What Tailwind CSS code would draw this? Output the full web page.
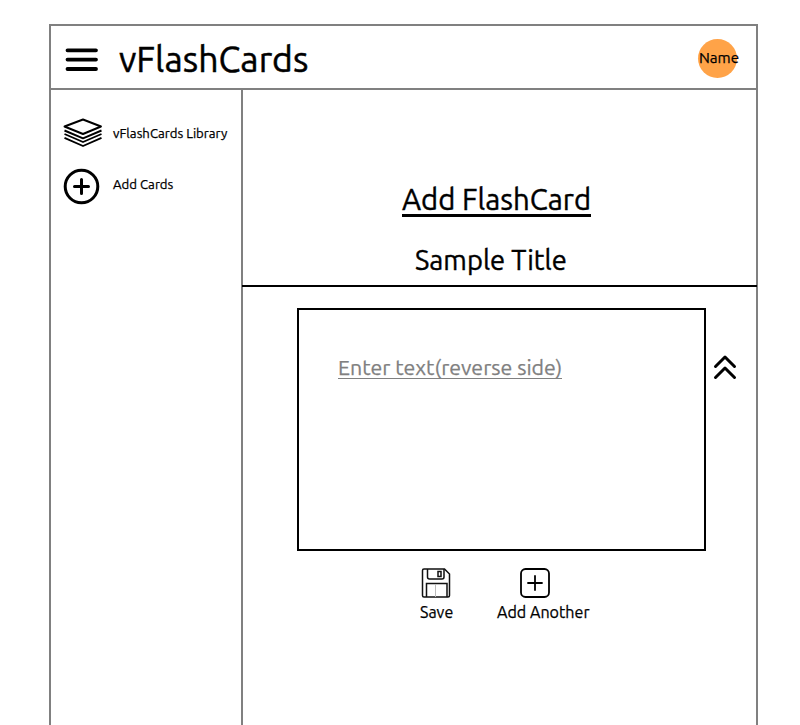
<!DOCTYPE html>
<html lang="en">
<head>
<meta charset="utf-8">
<title>vFlashCards</title>
<script src="https://cdn.jsdelivr.net/npm/@tailwindcss/browser@4"></script>
</head>
<body class="h-[725px] overflow-hidden bg-white pt-6 pl-[49px] font-['Ubuntu','Noto_Sans',sans-serif] text-black [-webkit-text-stroke:0.25px]">
<div class="flex h-[701px] w-[709px] flex-col border-2 border-b-0 border-[#808080]">
  <header class="flex h-16 shrink-0 items-center border-b-2 border-[#808080] pl-[14px]">
    <svg class="mt-[5px] h-[26px] w-[34px]" viewBox="0 0 34 26" stroke="#000" stroke-width="3.8" stroke-linecap="round"><path d="M2.5 3.3h28.5M2.5 12.600h28.5M2.5 22h28.5"/></svg>
    <h1 class="ml-5 h-[62px] w-[190px] text-[35.6px] leading-[66px] whitespace-nowrap [-webkit-text-stroke:0.5px]">vFlashCards</h1>
    <div class="mt-[2px] ml-[389px] flex size-[39px] items-center justify-center rounded-full bg-[#ffa348]"><span class="mt-px ml-[3px] text-[15.2px]">Name</span></div>
  </header>
  <div class="flex min-h-0 flex-1">
    <nav class="w-[192px] shrink-0 border-r-2 border-[#808080] pt-[26px] pl-3">
      <a class="flex h-8 items-center">
        <svg class="h-[31px] w-10" viewBox="0 0 40 31" fill="none" stroke="#000" stroke-width="1.9" stroke-linejoin="round"><path d="M20 2.500 38 9.500 20 17 1.500 9.500Z M1.500 13.500 20 21.300 38.500 13.500M1.500 17 20 25 38.500 17M1.500 20.800 20 29 38.500 20.800"/></svg>
        <span class="mt-0.5 ml-[10px] text-[13.2px] leading-5 whitespace-nowrap">vFlashCards Library</span>
      </a>
      <a class="mt-[19px] flex h-10 items-center">
        <svg class="h-[38px] w-[38px]" viewBox="0 0 38 38" fill="none" stroke="#000" stroke-width="3" stroke-linecap="round"><circle cx="18.500" cy="18.500" r="16.300"/><path d="M18.500 11.500v14M11.500 18.500h14"/></svg>
        <span class="mb-1.5 ml-3 text-[13.2px] leading-5 whitespace-nowrap">Add Cards</span>
      </a>
    </nav>
    <main class="flex min-w-0 flex-1 flex-col">
      <h2 class="mt-[88px] ml-[159px] h-[39px] w-[189px] border-b-3 border-black text-[29.33px] leading-[44px] whitespace-nowrap [-webkit-text-stroke:0.4px]">Add FlashCard</h2>
      <h3 class="mt-[23px] ml-[172px] h-10 text-[27.3px] leading-[41px] whitespace-nowrap [-webkit-text-stroke:0.4px]">Sample Title</h3>
      <hr class="mt-[5px] -mr-px -ml-px border-t-2 border-black">
      <div class="mt-[21px] ml-[54px] flex">
        <section class="h-[243px] w-[409px] border-2 border-black pt-[45px] pl-[39px]">
          <p class="h-[24px] w-[224px] border-b border-[#808080] text-[21.33px] leading-[24px] whitespace-nowrap text-[#808080]">Enter text(reverse side)</p>
        </section>
        <svg class="mt-[46px] ml-[7px] h-[26px] w-6" viewBox="0 0 24 26" fill="none" stroke="#000" stroke-width="3" stroke-linecap="round" stroke-linejoin="round"><path d="M2.500 12.500 12 3 21.500 12.500M2.500 23.500 12 14 21.500 23.500"/></svg>
      </div>
      <div class="mt-4 ml-[176px] flex">
        <button class="flex w-[36px] flex-col items-start">
          <svg class="ml-[2px] h-8 w-[30px]" viewBox="0 0 30 32" fill="none" stroke="#111" stroke-width="1.500"><path d="M3 2h20.500l5 5v21.500q0 1.500-1.500 1.500H3q-1.500 0-1.500-1.500v-25Q1.500 2 3 2Z"/><path d="M6.500 2v8q0 2 2 2h12.500q2 0 2-2V2M5.500 30V16.500h20.500V30"/><path d="M17 4.500h3v5h-3Z"/><path d="M14.500 17v13" stroke="#bbb" stroke-width="1"/></svg>
          <span class="ml-px h-6 text-[16px] leading-[27px]">Save</span>
        </button>
        <button class="ml-[42px] flex flex-col items-start">
          <svg class="ml-[22px] h-8 w-8" viewBox="0 0 32 32" fill="none" stroke="#000" stroke-width="1.800" stroke-linecap="round"><rect x="2" y="2" width="28" height="28" rx="4.500"/><path d="M16 9v14M9 16h14"/></svg>
          <span class="h-6 text-[16.1px] leading-[27px] whitespace-nowrap">Add Another</span>
        </button>
      </div>
    </main>
  </div>
</div>
</body>
</html>
